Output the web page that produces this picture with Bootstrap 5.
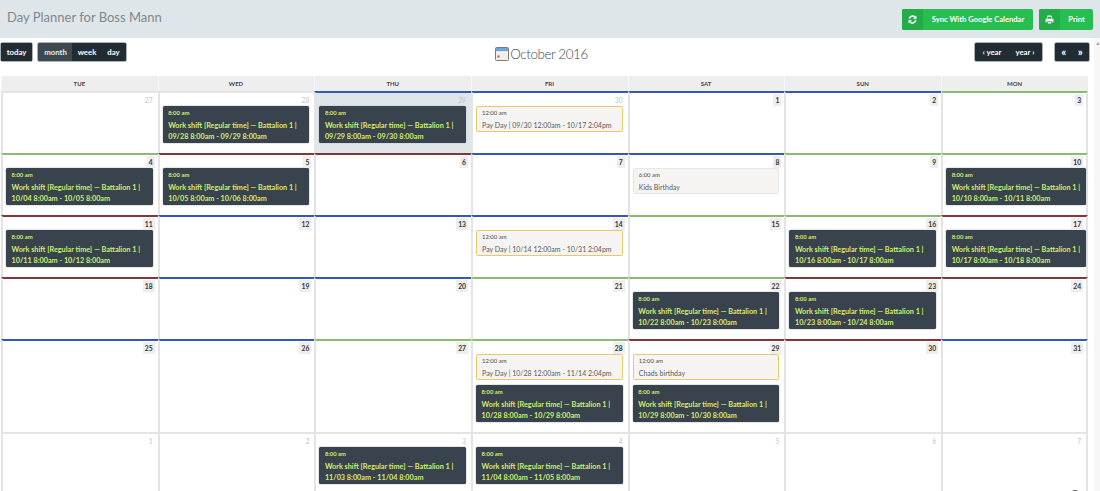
<!DOCTYPE html>
<html lang="en">
<head>
<meta charset="utf-8">
<title>Day Planner</title>
<link rel="stylesheet" href="https://cdn.jsdelivr.net/npm/bootstrap@5.3.0/dist/css/bootstrap.min.css">
<style>
html,body{height:491px;overflow:hidden}
body{font-family:Lato,"Liberation Sans",sans-serif;background:#fff;color:#555;position:relative}
.top-strip{height:38px;background:#dfe6e9;padding:8px 7px 0 7px}
.brand-name{font-size:13px;line-height:18px;color:#7f878c;font-weight:400;margin:0}
.top-actions{gap:6px}
.sync-btn{display:flex;height:21px;margin-top:1px;padding:0;border:0;border-radius:2px;overflow:hidden;background:#27bd4f;color:#fff;font-size:7.6px;font-weight:700;align-items:stretch}
.sync-btn:hover{background:#27bd4f;color:#fff}
.sync-wide{width:131px}
.sync-short{width:54px}
.sync-ico{width:21px;background:#23ac47;display:flex;align-items:center;justify-content:center}
.sync-txt{display:flex;align-items:center;justify-content:center;flex:1}
.tool-row{height:38px;padding:5px 11px 0 1px}
.left-tools{gap:6px}
.right-tools{gap:13px}
.dark-group{box-shadow:0 0 0 .5px #59636a;border-radius:1px}
.dark-btn{background:#222c33;border:0;color:#fff;font-size:7.8px;font-weight:700;line-height:18px;padding:0;height:18px;border-radius:1px}
.btn-group>.dark-btn:not(:first-child){margin-left:0}
.dark-btn:hover{background:#222c33;color:#fff}
.dark-btn.on{background:#3e484f;color:#e9ecee}
.w-today{width:31px;box-shadow:0 0 0 .5px #59636a}
.w-month{width:35px}
.w-week{width:30px}
.w-day{width:25px}
.w-year{width:34px}
.w-arrow{width:17.5px;font-size:11px}
.cal-title{font-size:13.4px;font-weight:300;letter-spacing:-.4px;color:#45494d;margin:1px 18px 0 0;line-height:20px;display:flex;align-items:center;gap:1px}
.cal-wrap{display:grid;grid-template-columns:repeat(6,156.7px) 147px;margin-left:1px;width:1087.2px}
.head-cell{height:15px;background:#eee;border-radius:2px 2px 0 0;font-size:6px;font-weight:700;color:#444;text-align:center;line-height:15px;text-transform:uppercase;box-shadow:inset 1px 0 0 #f8f8f8}
.day{border-left:2px solid #e4e4e4;border-top:2px solid #e4e4e4;padding:1px 0 10px 0;min-height:62px}
.day.end{border-right:2px solid #e4e4e4}
.line-b{border-top-color:#3558b8}
.line-g{border-top-color:#8dba72}
.line-r{border-top-color:#80363a}
.day.now{background:#dfe6e9}
.num-wrap{display:flex;justify-content:flex-end;height:12px;padding-right:3px}
.num-on{background:#eee;color:#333;font-size:6.8px;font-weight:700;line-height:12px;padding:0 2px;min-width:8px;text-align:center}
.num-off{color:#c4c4c4;font-size:6.8px;line-height:12px;padding:0 2px}
.ev{margin:0 5px 5px 3px;padding:2px 5px 0 5.5px;border-radius:1.5px;font-size:7.25px;line-height:11px}
.ev:last-child{margin-bottom:0}
.ev-time{font-size:5.9px;line-height:10px;height:12px;display:block}
.ev-dark{background:#39434d;color:#d2ec6e;font-weight:700;height:37px;box-shadow:0 0 0 .5px #c9ced2}
.ev-gold,.ev-plain{background:#f5f4f2;color:#5a5a5a;height:26px;padding:1px 5px 0 5px;font-size:7px}
.ev-gold{border:1px solid #e8c96a}
.ev-plain{border:1px solid #e6e6e6}
.ev-gold .ev-time,.ev-plain .ev-time{color:#4a4a4a}
.last-ev{margin-right:0}
.track{position:absolute;top:38px;right:0;bottom:0;width:6px;background:#f7f7f7}
.track-arrow{position:absolute;top:4px;right:0;width:0;height:0;border-left:2.5px solid transparent;border-right:2.5px solid transparent;border-bottom:3px solid #aaa}
.float-dot{position:absolute;left:1070px;top:490px;width:10px;height:10px;border-radius:50%;background:#59646c;box-shadow:0 0 4px 2px rgba(255,255,255,.9)}
</style>
</head>
<body>
<header class="top-strip d-flex justify-content-between align-items-start">
  <h1 class="brand-name">Day Planner for Boss Mann</h1>
  <div class="d-flex top-actions">
    <button class="btn sync-btn sync-wide" type="button"><span class="sync-ico"><svg width="9" height="9" viewBox="0 0 16 16" fill="none"><path d="M2.2 7A6 6 0 0 1 12.400 3.600" stroke="#fff" stroke-width="2.600"/><path d="M15 1v6H9z" fill="#fff"/><path d="M13.800 9A6 6 0 0 1 3.600 12.400" stroke="#fff" stroke-width="2.600"/><path d="M1 15V9h6z" fill="#fff"/></svg></span><span class="sync-txt">Sync With Google Calendar</span></button>
    <button class="btn sync-btn sync-short" type="button"><span class="sync-ico"><svg width="9" height="9" viewBox="0 0 16 16" fill="#fff"><path d="M4 1h6.500L12 2.500V6h-1.400V3H5.400v3H4z"/><path d="M1 6.500h14V13h-3v-2.500H4V13H1z"/><path d="M5 12h6v3H5z"/></svg></span><span class="sync-txt">Print</span></button>
  </div>
</header>

<section class="tool-row d-flex justify-content-between align-items-start">
  <div class="d-flex left-tools">
    <button class="btn dark-btn w-today" type="button">today</button>
    <div class="btn-group dark-group">
      <button class="btn dark-btn on w-month" type="button">month</button>
      <button class="btn dark-btn w-week" type="button">week</button>
      <button class="btn dark-btn w-day" type="button">day</button>
    </div>
  </div>
  <h2 class="cal-title"><svg width="14" height="14" viewBox="0 0 14 14"><rect x=".5" y=".5" width="13" height="13" rx="1" fill="#f2eeea" stroke="#86766e"/><rect x="1" y="1" width="12" height="3.500" fill="#6aa6d8"/><rect x="1" y="4.500" width="12" height="1" fill="#fff"/><rect x="2.500" y="8.500" width="2" height="2" fill="#d8453a"/></svg>October 2016</h2>
  <div class="d-flex right-tools">
    <div class="btn-group dark-group">
      <button class="btn dark-btn w-year" type="button">‹ year</button>
      <button class="btn dark-btn w-year" type="button">year ›</button>
    </div>
    <div class="btn-group dark-group">
      <button class="btn dark-btn w-arrow" type="button">«</button>
      <button class="btn dark-btn w-arrow" type="button">»</button>
    </div>
  </div>
</section>

<main class="cal-wrap">
  <div class="head-cell">Tue</div><div class="head-cell">Wed</div><div class="head-cell">Thu</div><div class="head-cell">Fri</div><div class="head-cell">Sat</div><div class="head-cell">Sun</div><div class="head-cell">Mon</div>

  <div class="day"><div class="num-wrap"><span class="num-off">27</span></div></div>
  <div class="day"><div class="num-wrap"><span class="num-off">28</span></div>
    <div class="ev ev-dark"><span class="ev-time">8:00 am</span>Work shift [Regular time] — Battalion 1 | 09/28 8:00am - 09/29 8:00am</div></div>
  <div class="day now line-b"><div class="num-wrap"><span class="num-off">29</span></div>
    <div class="ev ev-dark"><span class="ev-time">8:00 am</span>Work shift [Regular time] — Battalion 1 | 09/29 8:00am - 09/30 8:00am</div></div>
  <div class="day line-b"><div class="num-wrap"><span class="num-off">30</span></div>
    <div class="ev ev-gold"><span class="ev-time">12:00 am</span>Pay Day | 09/30 12:00am - 10/17 2:04pm</div></div>
  <div class="day line-b"><div class="num-wrap"><span class="num-on">1</span></div></div>
  <div class="day line-b"><div class="num-wrap"><span class="num-on">2</span></div></div>
  <div class="day end line-g"><div class="num-wrap"><span class="num-on">3</span></div></div>

  <div class="day line-g"><div class="num-wrap"><span class="num-on">4</span></div>
    <div class="ev ev-dark"><span class="ev-time">8:00 am</span>Work shift [Regular time] — Battalion 1 | 10/04 8:00am - 10/05 8:00am</div></div>
  <div class="day line-r"><div class="num-wrap"><span class="num-on">5</span></div>
    <div class="ev ev-dark"><span class="ev-time">8:00 am</span>Work shift [Regular time] — Battalion 1 | 10/05 8:00am - 10/06 8:00am</div></div>
  <div class="day line-r"><div class="num-wrap"><span class="num-on">6</span></div></div>
  <div class="day line-b"><div class="num-wrap"><span class="num-on">7</span></div></div>
  <div class="day line-b"><div class="num-wrap"><span class="num-on">8</span></div>
    <div class="ev ev-plain"><span class="ev-time">6:00 am</span>Kids Birthday</div></div>
  <div class="day line-g"><div class="num-wrap"><span class="num-on">9</span></div></div>
  <div class="day end line-g"><div class="num-wrap"><span class="num-on">10</span></div>
    <div class="ev ev-dark last-ev"><span class="ev-time">8:00 am</span>Work shift [Regular time] — Battalion 1 | 10/10 8:00am - 10/11 8:00am</div></div>

  <div class="day line-r"><div class="num-wrap"><span class="num-on">11</span></div>
    <div class="ev ev-dark"><span class="ev-time">8:00 am</span>Work shift [Regular time] — Battalion 1 | 10/11 8:00am - 10/12 8:00am</div></div>
  <div class="day line-b"><div class="num-wrap"><span class="num-on">12</span></div></div>
  <div class="day line-b"><div class="num-wrap"><span class="num-on">13</span></div></div>
  <div class="day line-b"><div class="num-wrap"><span class="num-on">14</span></div>
    <div class="ev ev-gold"><span class="ev-time">12:00 am</span>Pay Day | 10/14 12:00am - 10/31 2:04pm</div></div>
  <div class="day line-g"><div class="num-wrap"><span class="num-on">15</span></div></div>
  <div class="day line-g"><div class="num-wrap"><span class="num-on">16</span></div>
    <div class="ev ev-dark"><span class="ev-time">8:00 am</span>Work shift [Regular time] — Battalion 1 | 10/16 8:00am - 10/17 8:00am</div></div>
  <div class="day end line-r"><div class="num-wrap"><span class="num-on">17</span></div>
    <div class="ev ev-dark last-ev"><span class="ev-time">8:00 am</span>Work shift [Regular time] — Battalion 1 | 10/17 8:00am - 10/18 8:00am</div></div>

  <div class="day line-r"><div class="num-wrap"><span class="num-on">18</span></div></div>
  <div class="day line-b"><div class="num-wrap"><span class="num-on">19</span></div></div>
  <div class="day line-b"><div class="num-wrap"><span class="num-on">20</span></div></div>
  <div class="day line-g"><div class="num-wrap"><span class="num-on">21</span></div></div>
  <div class="day line-g"><div class="num-wrap"><span class="num-on">22</span></div>
    <div class="ev ev-dark"><span class="ev-time">8:00 am</span>Work shift [Regular time] — Battalion 1 | 10/22 8:00am - 10/23 8:00am</div></div>
  <div class="day line-r"><div class="num-wrap"><span class="num-on">23</span></div>
    <div class="ev ev-dark"><span class="ev-time">8:00 am</span>Work shift [Regular time] — Battalion 1 | 10/23 8:00am - 10/24 8:00am</div></div>
  <div class="day end line-r"><div class="num-wrap"><span class="num-on">24</span></div></div>

  <div class="day line-b"><div class="num-wrap"><span class="num-on">25</span></div></div>
  <div class="day line-b"><div class="num-wrap"><span class="num-on">26</span></div></div>
  <div class="day line-g"><div class="num-wrap"><span class="num-on">27</span></div></div>
  <div class="day line-g"><div class="num-wrap"><span class="num-on">28</span></div>
    <div class="ev ev-gold"><span class="ev-time">12:00 am</span>Pay Day | 10/28 12:00am - 11/14 2:04pm</div>
    <div class="ev ev-dark"><span class="ev-time">8:00 am</span>Work shift [Regular time] — Battalion 1 | 10/28 8:00am - 10/29 8:00am</div></div>
  <div class="day line-r"><div class="num-wrap"><span class="num-on">29</span></div>
    <div class="ev ev-gold"><span class="ev-time">12:00 am</span>Chads birthday</div>
    <div class="ev ev-dark"><span class="ev-time">8:00 am</span>Work shift [Regular time] — Battalion 1 | 10/29 8:00am - 10/30 8:00am</div></div>
  <div class="day line-r"><div class="num-wrap"><span class="num-on">30</span></div></div>
  <div class="day end line-b"><div class="num-wrap"><span class="num-on">31</span></div></div>

  <div class="day"><div class="num-wrap"><span class="num-off">1</span></div></div>
  <div class="day"><div class="num-wrap"><span class="num-off">2</span></div></div>
  <div class="day"><div class="num-wrap"><span class="num-off">3</span></div>
    <div class="ev ev-dark"><span class="ev-time">8:00 am</span>Work shift [Regular time] — Battalion 1 | 11/03 8:00am - 11/04 8:00am</div></div>
  <div class="day"><div class="num-wrap"><span class="num-off">4</span></div>
    <div class="ev ev-dark"><span class="ev-time">8:00 am</span>Work shift [Regular time] — Battalion 1 | 11/04 8:00am - 11/05 8:00am</div></div>
  <div class="day"><div class="num-wrap"><span class="num-off">5</span></div></div>
  <div class="day"><div class="num-wrap"><span class="num-off">6</span></div></div>
  <div class="day end"><div class="num-wrap"><span class="num-off">7</span></div></div>
</main>
<div class="track"><span class="track-arrow"></span></div>
<div class="float-dot"></div>
</body>
</html>
